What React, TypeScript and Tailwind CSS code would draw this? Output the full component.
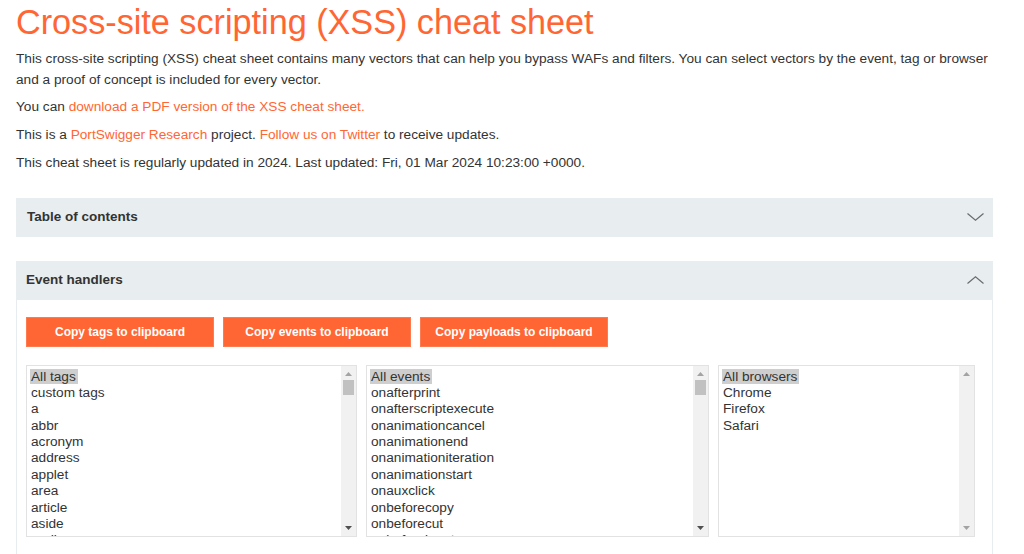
import React from "react";

// Lists shown in the three selectors
const TAGS = ["All tags", "custom tags", "a", "abbr", "acronym", "address", "applet", "area", "article", "aside", "audio", "b"];
const EVENTS = [
  "All events",
  "onafterprint",
  "onafterscriptexecute",
  "onanimationcancel",
  "onanimationend",
  "onanimationiteration",
  "onanimationstart",
  "onauxclick",
  "onbeforecopy",
  "onbeforecut",
  "onbeforeinput",
  "onbeforeprint",
];
const BROWSERS = ["All browsers", "Chrome", "Firefox", "Safari"];

function Chevron({ up }: { up?: boolean }) {
  return (
    <svg width="17" height="8" viewBox="0 0 17 8" className="shrink-0">
      <polyline
        points={up ? "0.5,7.5 8.5,0.8 16.5,7.5" : "0.5,0.5 8.5,7.2 16.5,0.5"}
        fill="none"
        stroke="#6b6b6b"
        strokeWidth="1.2"
      />
    </svg>
  );
}

function ListBox({ items, width, scrollable }: { items: string[]; width: string; scrollable: boolean }) {
  return (
    <div className={`${width} flex h-[172px] overflow-hidden border border-[#e2e2e2] bg-white`}>
      <ul className="flex-1 overflow-hidden pl-[4px] pt-[3px]">
        {items.map((item, i) => (
          <li key={item} className="h-[16.4px] leading-[16.4px] text-[13.66px] text-[#333]">
            <span className={i === 0 ? "bg-[#cecece] pl-px pr-[2px] -ml-px" : ""}>{item}</span>
          </li>
        ))}
      </ul>
      {/* Scrollbar */}
      <div className="flex w-[15px] flex-col items-center bg-[#f1f1f1]">
        <svg width="7" height="4" viewBox="0 0 7 4" className="mt-[6px]">
          <polygon points="0,4 3.5,0 7,4" fill="#a3a3a3" />
        </svg>
        {scrollable && <div className="mt-[4px] h-[15px] w-[11px] bg-[#c1c1c1]" />}
        <div className="flex-1" />
        <svg width="7" height="4" viewBox="0 0 7 4" className="mb-[6px]">
          <polygon points="0,0 3.5,4 7,0" fill={scrollable ? "#505050" : "#a3a3a3"} />
        </svg>
      </div>
    </div>
  );
}

export default function App() {
  return (
    <div className="min-h-[554px] bg-white font-['Liberation_Sans',Arial,sans-serif] text-[#333]">
      <div className="w-[993px] pl-4">
        <h1 className="pt-[2px] text-[34.2px] leading-[40px] text-[#ff6633]">Cross-site scripting (XSS) cheat sheet</h1>

        <div className="mt-[7px] text-[13.66px] leading-[20.5px]">
          <p className="mb-[7px]">
            This cross-site scripting (XSS) cheat sheet contains many vectors that can help you bypass WAFs and filters. You can select vectors by the event, tag or browser and a proof of concept is included for every vector.
          </p>
          <p className="mb-[7.5px]">
            You can <a className="text-[#ff6633]">download a PDF version of the XSS cheat sheet.</a>
          </p>
          <p className="mb-[7.5px]">
            This is a <a className="text-[#ff6633]">PortSwigger Research</a> project.{" "}
            <a className="text-[#ff6633]">Follow us on Twitter</a> to receive updates.
          </p>
          <p>This cheat sheet is regularly updated in 2024. Last updated: Fri, 01 Mar 2024 10:23:00 +0000.</p>
        </div>

        {/* Table of contents */}
        <div className="mt-[24.5px] flex h-[38.5px] items-center justify-between bg-[#e8edf0] pl-[11px] pr-[9px]">
          <span className="text-[13.5px] font-bold text-[#333]">Table of contents</span>
          <Chevron />
        </div>

        {/* Event handlers */}
        <div className="mt-[24.5px] flex h-[38.5px] items-center justify-between bg-[#e8edf0] pl-[10px] pr-[9px]">
          <span className="text-[13.5px] font-bold text-[#333]">Event handlers</span>
          <Chevron up />
        </div>
        <div className="border-x border-[#e6ecf0] pb-[20px] pl-[9px] pt-[17px]">
          <div className="flex gap-[9px]">
            {["Copy tags to clipboard", "Copy events to clipboard", "Copy payloads to clipboard"].map(label => (
              <button
                key={label}
                className="h-[30.5px] w-[188px] border border-[#ff7a4f] bg-[#ff6633] text-[12px] font-bold text-white"
              >
                {label}
              </button>
            ))}
          </div>
          <div className="mt-[17.5px] flex gap-[9px]">
            <ListBox items={TAGS} width="w-[331px]" scrollable />
            <ListBox items={EVENTS} width="w-[343px]" scrollable />
            <ListBox items={BROWSERS} width="w-[257px]" scrollable={false} />
          </div>
        </div>
      </div>
    </div>
  );
}
